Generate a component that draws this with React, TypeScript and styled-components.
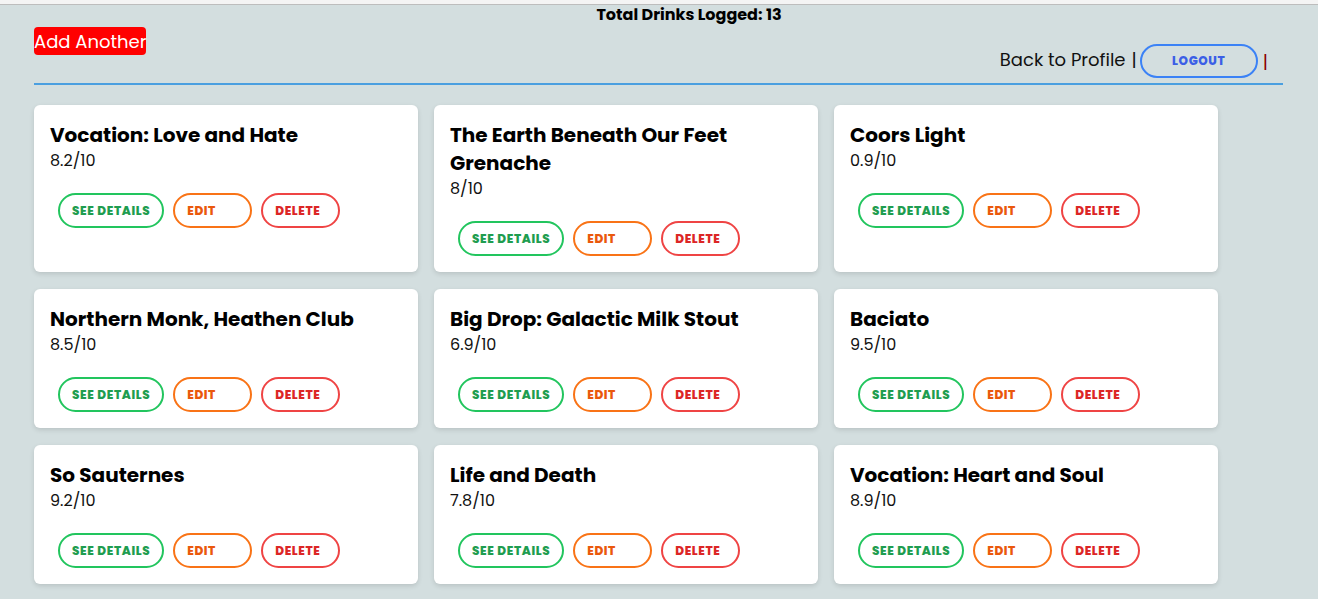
import React from "react";
import styled, { createGlobalStyle } from "styled-components";

const GlobalStyle = createGlobalStyle`
  html, body { margin: 0; padding: 0; }
  body {
    background: #d3dedf;
    font-family: "Poppins", "Open Sans", "Noto Sans", sans-serif;
    color: #000;
  }
`;

const Page = styled.div`
  min-height: 599px;
  background: #d3dedf;
`;

const TopStrip = styled.div`
  height: 4px;
  background: #f4f4f4;
  border-bottom: 1px solid #bdbdbd;
`;

const Header = styled.header`
  margin: 0 35px 0 34px;
  border-bottom: 2px solid #4a9fe0;
`;

const Total = styled.h1`
  margin: 0;
  padding-left: 61px;
  font-size: 16px;
  line-height: 20px;
  font-weight: 700;
  text-align: center;
`;

const HeaderRow = styled.div`
  display: flex;
  justify-content: space-between;
  align-items: flex-end;
  min-height: 51px;
  padding: 2px 0 5px;
`;

const AddButton = styled.button`
  align-self: flex-start;
  height: 28px;
  padding: 0;
  width: 112px;
  border: none;
  border-radius: 4px;
  background: #ff0000;
  color: #fff;
  font-family: inherit;
  font-size: 18px;
  white-space: nowrap;
`;

const Nav = styled.nav`
  display: flex;
  align-items: center;
  margin-right: 15px;
  font-size: 18px;
  color: #111;
`;

const NavLink = styled.span`
  margin: 0 6px 3px 0;
`;

const Sep = styled.span<{ $red?: boolean }>`
  color: ${(p) => (p.$red ? "#8b0000" : "#111")};
  margin: ${(p) => (p.$red ? "0 0 0 5px" : "0 3px 3px 0")};
`;

const LogoutButton = styled.button`
  width: 118px;
  height: 34px;
  border: 2px solid #3b82f6;
  border-radius: 17px;
  background: transparent;
  color: #3b5fe6;
  font-family: inherit;
  font-weight: 800;
  font-size: 12px;
  letter-spacing: 0.6px;
`;

const Grid = styled.main`
  display: grid;
  grid-template-columns: repeat(3, 384px);
  gap: 17px 16px;
  padding: 20px 34px 16px;
`;

const Card = styled.article`
  background: #fff;
  border-radius: 6px;
  padding: 16px;
  box-shadow: 0 2px 5px rgba(0, 0, 0, 0.12);
`;

const Title = styled.h2`
  margin: 0;
  font-size: 20px;
  line-height: 28px;
  font-weight: 700;
`;

const Rating = styled.p`
  margin: 0;
  font-size: 16px;
  line-height: 24px;
  color: #111;
`;

const Actions = styled.div`
  display: flex;
  gap: 9px;
  padding: 20px 0 0 8px;
`;

const palette = {
  green: { border: "#22c55e", text: "#1f9d4f" },
  orange: { border: "#f97316", text: "#ea580c" },
  red: { border: "#ef4444", text: "#dc2626" },
};

const ActionButton = styled.button<{ $tone: keyof typeof palette }>`
  min-width: 79px;
  height: 35px;
  padding: 0 12px;
  border: 2px solid ${(p) => palette[p.$tone].border};
  border-radius: 18px;
  background: #fff;
  color: ${(p) => palette[p.$tone].text};
  font-family: inherit;
  font-size: 12px;
  font-weight: 800;
  letter-spacing: 0.6px;
  text-align: left;
  white-space: nowrap;
`;

const drinks = [
  { name: "Vocation: Love and Hate", rating: "8.2" },
  { name: "The Earth Beneath Our Feet Grenache", rating: "8" },
  { name: "Coors Light", rating: "0.9" },
  { name: "Northern Monk, Heathen Club", rating: "8.5" },
  { name: "Big Drop: Galactic Milk Stout", rating: "6.9" },
  { name: "Baciato", rating: "9.5" },
  { name: "So Sauternes", rating: "9.2" },
  { name: "Life and Death", rating: "7.8" },
  { name: "Vocation: Heart and Soul", rating: "8.9" },
];

export default function App() {
  return (
    <Page>
      <GlobalStyle />
      <TopStrip />
      <Header>
        <Total>Total Drinks Logged: 13</Total>
        <HeaderRow>
          <AddButton>Add Another</AddButton>
          <Nav>
            <NavLink>Back to Profile</NavLink>
            <Sep>|</Sep>
            <LogoutButton>LOGOUT</LogoutButton>
            <Sep $red>|</Sep>
          </Nav>
        </HeaderRow>
      </Header>
      <Grid>
        {drinks.map((d) => (
          <Card key={d.name}>
            <Title>{d.name}</Title>
            <Rating>{d.rating}/10</Rating>
            <Actions>
              <ActionButton $tone="green">SEE DETAILS</ActionButton>
              <ActionButton $tone="orange">EDIT</ActionButton>
              <ActionButton $tone="red">DELETE</ActionButton>
            </Actions>
          </Card>
        ))}
      </Grid>
    </Page>
  );
}
